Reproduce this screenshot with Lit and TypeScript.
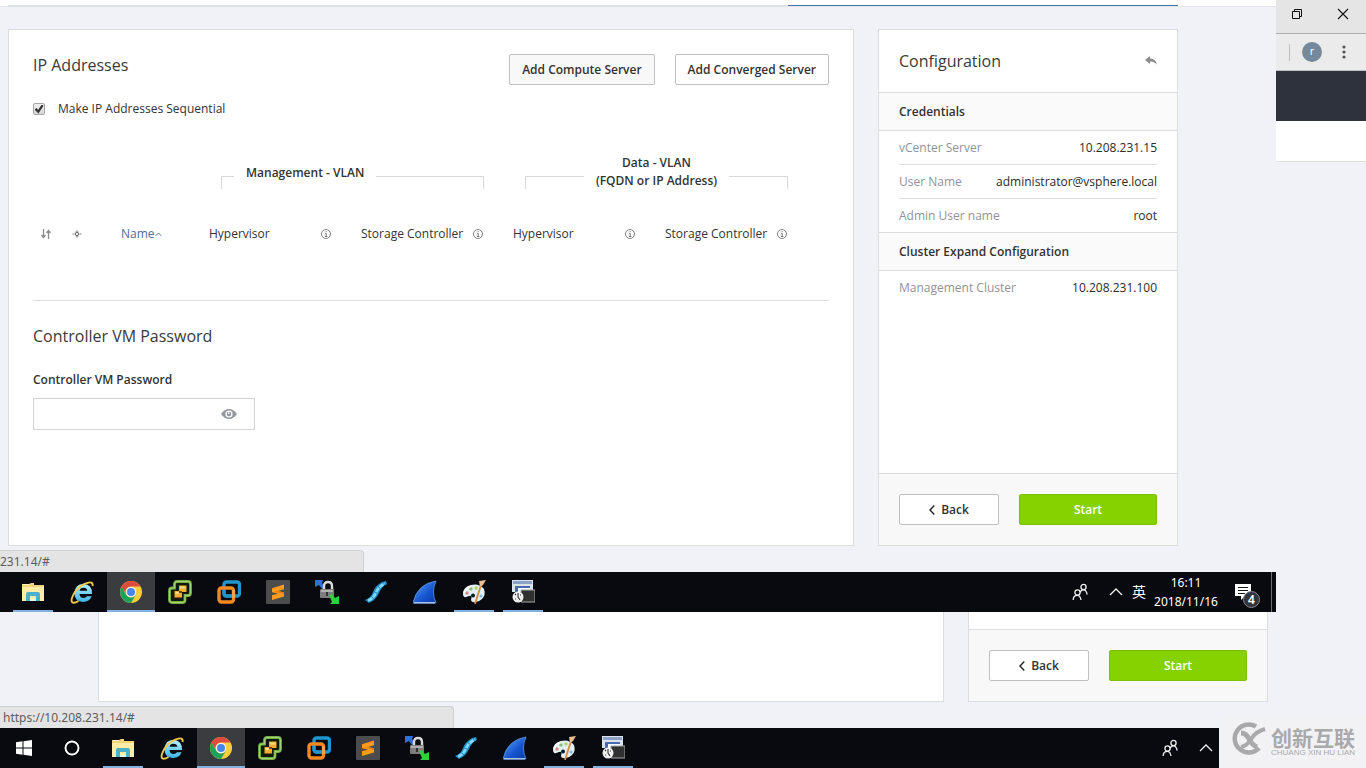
import { LitElement, html, css, svg, nothing } from "lit";
import { customElement, property } from "lit/decorators.js";
import { classMap } from "lit/directives/class-map.js";

const folder = svg`
  <path d="M1 4h7l2-1h3v2h10v16H1z" fill="#f2d675"/>
  <path d="M1 7h22v14H1z" fill="#ffeca8"/>
  <path d="M2 4h6v1H2z" fill="#fff6d0"/>
  <path d="M5 14q0-2 2-2h10q2 0 2 2v7h-4v-5H9v5H5z" fill="#4bb1c6"/>
  <path d="M9 19h6v2H9z" fill="#e8f6f7"/>`;

const explorer = svg`
  <defs><linearGradient id="ie" x1="0" y1="0" x2="0" y2="1">
    <stop offset="0" stop-color="#b5efff"/><stop offset="1" stop-color="#3cb4e8"/>
  </linearGradient></defs>
  <path d="M22 14H9.500q.4 4 4 4 2.400 0 3.500-1.700h4.600Q19.500 22 13 22 4.500 21.500 4.500 13 5 4 13.500 4 22.500 4.500 22 14zM17.300 10.700Q17 7.800 13.500 7.800T9.600 10.700z" fill="url(#ie)"/>
  <path d="M22.500 6Q23.500 1.600 18.500 2.600 10.500 4.500 5.200 11.500-.3 20.500 2.500 22.500q2 1 6-1.500" fill="none" stroke="#f2c84b" stroke-width="1.900"/>`;

const chrome = svg`
  <circle cx="12" cy="12" r="11" fill="#f7cf3b"/>
  <path d="M2.500 6.500A11 11 0 0 1 21.500 6.500H12A5.500 5.500 0 0 0 7.200 14.800z" fill="#dd4b3e"/>
  <path d="M2.500 6.500A11 11 0 0 0 12 23L16.800 14.800A5.500 5.500 0 0 1 7.200 14.800z" fill="#1fa05c"/>
  <circle cx="12" cy="12" r="5.200" fill="#f5f5f5"/>
  <circle cx="12" cy="12" r="4" fill="#4a84ee"/>`;

const vsphere = svg`
  <path d="M9 1.500h11q2.500 0 2.500 2.500v9q0 2.500-2.500 2.500h-3V20q0 2.500-2.500 2.500H4q-2.500 0-2.500-2.500v-9.500Q1.500 8 4 8h2.500V4Q6.500 1.500 9 1.500z" fill="#11190a" stroke="#74b042" stroke-width="2.800"/>
  <path d="M9 1.500h11q2.500 0 2.500 2.500v9q0 2.500-2.500 2.500h-3V20q0 2.500-2.500 2.500H4q-2.500 0-2.500-2.500v-9.500Q1.500 8 4 8h2.500V4Q6.500 1.500 9 1.500z" fill="none" stroke="#b9de8c" stroke-width=".7"/>
  <path d="M11 5.500h7.500V12H14v5.500H6.500V11H11z" fill="#f3ad33"/>
  <path d="M12 6.500h5.500v2H12zM7.500 12H11v2H7.500z" fill="#ffdb80"/>
  <path d="M11 11h3v2h-3z" fill="#6a4510"/>`;

const workstation = svg`
  <rect x="7" y="2" width="15.500" height="14" rx="2.500" fill="none" stroke="#2196cc" stroke-width="3.400"/>
  <rect x="2" y="8" width="14.500" height="14" rx="2.500" fill="none" stroke="#f28a24" stroke-width="3.400"/>
  <path d="M7 9.800V13.500q0 2.500 2.500 2.500H14" fill="none" stroke="#2196cc" stroke-width="3"/>
  <path d="M16.500 10v8" stroke="#f7a04b" stroke-width="3"/>`;

const sublime = svg`
  <rect width="24" height="24" rx="1" fill="#4c4c4c"/>
  <path d="M6 8.200L18 4.500V9.300L12 11 18 12.400V16.500L6 20V15.300L12 13.600 6 12.200z" fill="#ff9a1d"/>
  <path d="M12 11L18 12.400V14L8 11.800z" fill="#ea830f"/>`;

const transfer = svg`
  <path d="M0 0h8l-1 3 3 4-3 2-3-4-4 2z" fill="#2f6fe4"/>
  <path d="M9 9V6q0-4 4-4t4 4v4" fill="none" stroke="#dadada" stroke-width="2.400"/>
  <rect x="5" y="9" width="14" height="9" rx="1" fill="#7d7d7d"/>
  <path d="M6 10h12v2H6z" fill="#b0b0b0"/><path d="M11 12h2v4h-2z" fill="#333"/>
  <path d="M14 15l3-1 3 4 4-2v8h-9l2-2z" fill="#2fd13b"/>`;

const ribbon = svg`
  <path d="M1 20Q7 18 9 12T18 2l4-1 1 3q-5 2-8 9T5 23z" fill="#1f8fc6"/>
  <path d="M4 20.500Q9 19 12 12.500T21 3.500" fill="none" stroke="#7fd8f7" stroke-width="2.800" stroke-dasharray="5 1"/>`;

const fin = svg`
  <defs><linearGradient id="fin" x1="0" y1="0" x2="1" y2="1">
    <stop offset="0" stop-color="#5ea4f8"/><stop offset=".6" stop-color="#1554cf"/><stop offset="1" stop-color="#0a3ba4"/>
  </linearGradient></defs>
  <path d="M0 23Q4 4 23 1 18 12 23 23z" fill="url(#fin)" stroke="#5d94df" stroke-width=".8"/>
  <path d="M1 22h21v1.500H1z" fill="#a9c5ee"/>`;

const palette = svg`
  <path d="M1 14Q1 7 9 5t13 4q2 6-2 10t-9 3q-3-1-1.500-4 .5-3-2.500-2Q1 19 1 14z" fill="#e3f0f6"/>
  <path d="M2 13Q4 8 9 6.500" fill="none" stroke="#fff" stroke-width="2"/>
  <circle cx="5" cy="13" r="1.700" fill="#d98a84"/><circle cx="9" cy="9" r="1.700" fill="#8bbd78"/>
  <circle cx="14" cy="8" r="1.700" fill="#b4cf68"/><circle cx="11" cy="15.500" r="2" fill="#0a1a26"/>
  <circle cx="19" cy="16" r="1.600" fill="#7dbbe0"/>
  <path d="M19 5L13 24" stroke="#d48a3e" stroke-width="1.800"/><path d="M17 1l7-1-3 5-3 2z" fill="#e9bd8c"/>`;

const scheduler = svg`
  <path d="M1 0h21v12H1z" fill="#dbe2ea"/><path d="M2 1h19v3H2z" fill="#8ba2c6"/>
  <path d="M4 6h15v3H8v6H4z" fill="#4b69ae"/><path d="M7 8h12v4H7z" fill="#f7fafc"/>
  <path d="M10 10h14v12H10z" fill="#303030" stroke="#a8a8a8"/>
  <circle cx="7" cy="17" r="5.500" fill="#f0f0f0"/>
  <path d="M7 13v4l2 3M4 14l1 1M4 19h1M9 15h1" stroke="#333" stroke-width="1.100" fill="none"/>`;

const winLogo = svg`
  <path d="M4 6.300L10.500 5.300V11.500H4zM11.500 5.200L20 4V11.500H11.500zM4 12.500H10.500V18.700L4 17.700zM11.500 12.500H20V20L11.500 18.800z" fill="#fff"/>`;
const cortana = svg`<circle cx="12" cy="12" r="6.500" fill="none" stroke="#fff" stroke-width="1.900"/>`;

const people = svg`
  <g fill="none" stroke="#eee" stroke-width="1.300">
    <circle cx="5.500" cy="9.500" r="2.600"/><circle cx="11.500" cy="4" r="2.600"/>
    <path d="M1.200 17q0-4.600 4.300-4.600 2.600 0 3.500 4.600M8.300 9.500q.5-2.700 3.200-2.700t3.700 4.700"/>
  </g>`;

interface App { name: string; icon: unknown; state?: "open" | "active"; }

const apps: App[] = [
  { name: "File Explorer", icon: folder, state: "open" },
  { name: "Internet Explorer", icon: explorer },
  { name: "Chrome", icon: chrome, state: "active" },
  { name: "vSphere Client", icon: vsphere },
  { name: "Workstation", icon: workstation },
  { name: "Sublime Text", icon: sublime },
  { name: "WinSCP", icon: transfer },
  { name: "Terminal", icon: ribbon },
  { name: "Wireshark", icon: fin },
  { name: "Paint", icon: palette, state: "open" },
  { name: "Scheduler", icon: scheduler, state: "open" },
];

@customElement("task-bar")
export class TaskBar extends LitElement {
  @property({ type: Boolean }) start = false;
  @property({ type: Boolean }) clock = false;

  static styles = css`
    :host { display: block; background: #080a10; color: #fff; font-family: "Noto Sans", "Noto Sans CJK SC", sans-serif; }
    .bar { display: flex; height: 40px; }
    button { border: 0; padding: 0; margin: 0; background: none; color: inherit; font: inherit; display: flex; align-items: center; justify-content: center; }
    .system { display: flex; flex: none; width: 90px; }
    .system button { flex: none; width: 48px; }
    .apps { display: flex; gap: 1px; padding-left: 9px; flex: 1; }
    .app { width: 48px; }
    .app.open { background: linear-gradient(#83b2e0, #83b2e0) center bottom / 40px 2px no-repeat; }
    .app.active { background: linear-gradient(#83b2e0, #83b2e0) center bottom / 100% 2px no-repeat, #3b3c40; }
    .tray { display: flex; align-items: center; padding-right: 4px; }
    .tray.bare { padding-right: 152px; }
    .people { width: 30px; margin-right: 13px; }
    .chevron { width: 16px; }
    .lang { width: 16px; margin: 0 5px 0 7px; font-size: 14px; }
    .time { font-size: 12px; line-height: 19px; text-align: center; width: 68px; }
    .notes { position: relative; width: 36px; height: 40px; margin: 0 15px 0 0; padding-left: 9px; }
    .edge { width: 1px; height: 40px; background: #6b6d72; }
    .tray .notes { margin-right: 15px; }
    .count { position: absolute; right: -4px; bottom: 4px; width: 15px; height: 15px; border: 1px solid #85878c; border-radius: 50%; background: #33353a; font-size: 12px; line-height: 15px; font-weight: 600; }
  `;

  render() {
    return html`<div class="bar">
      ${this.start ? html`<div class="system">
        <button aria-label="Start menu"><svg width="24" height="24" viewBox="0 0 24 24">${winLogo}</svg></button>
        <button aria-label="Cortana"><svg width="24" height="24" viewBox="0 0 24 24">${cortana}</svg></button>
      </div>` : nothing}
      <div class="apps">
        ${apps.map((a) => html`<button aria-label=${a.name}
          class=${classMap({ app: true, open: a.state === "open", active: a.state === "active" })}>
          <svg width="24" height="24" viewBox="0 0 24 24">${a.icon}</svg></button>`)}
      </div>
      <div class=${classMap({ tray: true, bare: !this.clock })}>
        <button class="people" aria-label="People"><svg width="17" height="19" viewBox="0 0 17 19">${people}</svg></button>
        <button class="chevron" aria-label="Hidden icons"><svg width="14" height="8" viewBox="0 0 14 8"><path d="M1 7l6-6 6 6" fill="none" stroke="#eee" stroke-width="1.300"/></svg></button>
        ${this.clock ? html`
          <button class="lang">英</button>
          <div class="time">16:11<br />2018/11/16</div>
          <button class="notes" aria-label="Notifications">
            <svg width="18" height="18" viewBox="0 0 18 18"><path d="M1 1h16v12h-6l-4 4v-4H1z" fill="#fff"/><path d="M4 4.500h10M4 7.500h10M4 10.500h7" stroke="#15171c"/></svg>
            <span class="count">4</span>
          </button>
          <span class="edge"></span>` : nothing}
      </div>
    </div>`;
  }
}

@customElement("wizard-actions")
export class WizardActions extends LitElement {
  static styles = css`
    :host { display: block; border-top: 1px solid #dcdde1; background: #f8f8f8; padding: 20px; font: 12px/18px "Open Sans", sans-serif; }
    .row { display: flex; gap: 20px; }
    button { height: 31px; border-radius: 2px; font: inherit; font-weight: 600; padding: 0; display: flex; align-items: center; justify-content: center; gap: 6px; }
    .back { width: 100px; border: 1px solid #bfc0c4; background: #fff; color: #333; }
    .start { flex: 1; border: 1px solid #7cc004; background: #85d200; color: #fff; }
  `;
  render() {
    return html`<div class="row">
      <button class="back"><svg width="6" height="10" viewBox="0 0 6 10"><path d="M5.300 .6L1 5l4.300 4.400" fill="none" stroke="#222" stroke-width="1.400"/></svg>Back</button>
      <button class="start">Start</button>
    </div>`;
  }
}

const info = html`<svg class="info" width="10" height="10" viewBox="0 0 10 10"><circle cx="5" cy="5" r="4.500" fill="none" stroke="#777" stroke-width=".9"/><path d="M4 4.300h1.200v3.200M4 7.500h2.300M4.600 2.500h1" fill="none" stroke="#666" stroke-width=".9"/></svg>`;

const credentials = [
  ["vCenter Server", "10.208.231.15"],
  ["User Name", "administrator@vsphere.local"],
  ["Admin User name", "root"],
];
const cluster = [["Management Cluster", "10.208.231.100"]];

@customElement("app-root")
export class AppRoot extends LitElement {
  static styles = css`
    :host { display: block; font: 12px/18px "Open Sans", "Noto Sans CJK SC", sans-serif; color: #333; }
    * { box-sizing: border-box; }
    .screen { position: relative; display: grid; grid-template-columns: minmax(0, 1fr) 90px; grid-template-rows: 1fr auto auto; min-height: 100vh; background: #f1f2f7; }
    .front { display: flex; flex-direction: column; }
    .steps { display: flex; height: 7px; padding: 0 98px 0 8px; background: #fff; box-shadow: inset 0 -1px #e4e5e9; }
    .step { flex: 1; border-bottom: 2px solid #dfe0e3; }
    .step.current { margin-bottom: 1px; border-bottom: 1px solid #4a75a8; }
    .page { position: relative; flex: 1; display: flex; gap: 24px; padding: 22px 98px 26px 8px; }
    .card { background: #fff; border: 1px solid #dcdde1; }
    .main { flex: 1; min-width: 0; padding: 24px; }
    .side { width: 300px; display: flex; flex-direction: column; }
    .head { display: flex; justify-content: space-between; align-items: flex-start; }
    h1, h2, h3 { margin: 0; font-weight: 400; }
    h1, h2 { font-size: 16px; line-height: 22px; color: #3a3a3a; }
    .buttons { display: flex; gap: 20px; }
    .add { height: 31px; padding: 0 12px; border: 1px solid #bfc0c4; border-radius: 2px; background: #fff; color: #333; font: inherit; font-weight: 600; }
    .add.hover { background: #f8f8f8; }
    .check { display: flex; align-items: center; gap: 13px; margin-top: 15px; }
    .check input { appearance: none; margin: 0; width: 12px; height: 12px; border: 1px solid #a5a5a5; border-radius: 2px; background: linear-gradient(#f0f0f0, #d8d8d8); display: grid; place-items: center; }
    .check input:checked::before { content: ""; width: 9px; height: 9px; background: #333; clip-path: polygon(0 55%, 22% 38%, 40% 60%, 80% 0, 100% 14%, 44% 100%); }
    table { width: 100%; margin-top: 36px; border-collapse: collapse; table-layout: fixed; border-bottom: 1px solid #dcdde1; }
    th { padding: 0; font-weight: 400; text-align: left; vertical-align: bottom; }
    .c-sort { width: 31px; } .c-state { width: 45px; } .c-name { width: 88px; } .c-end { width: 24px; }
    .group { display: flex; align-items: flex-end; margin: 0 17px 0 24px; font-weight: 600; text-align: center; }
    .group i { flex: 1; height: 13px; margin-bottom: 1px; border-top: 1px solid #d6d7db; }
    .group i:first-child { border-left: 1px solid #d6d7db; }
    .group i:last-child { border-right: 1px solid #d6d7db; }
    .group .short { flex: 0 0 13px; }
    .group span { padding: 0 12px; }
    .group .raised { padding-bottom: 8px; }
    .labels th { padding: 35px 0 57px 12px; vertical-align: middle; }
    .labels th.tight { padding-left: 8px; }
    .labels svg { display: block; }
    .label { display: flex; align-items: center; justify-content: space-between; padding-right: 18px; }
    .sorted { display: flex; align-items: center; color: #4a6ea5; text-decoration: none; }
    .section { margin-top: 24px; }
    .field-label { display: block; margin: 24px 0 9px; font-weight: 600; }
    .field { display: flex; align-items: center; width: 222px; height: 32px; border: 1px solid #d3d4d8; }
    .field input { flex: 1; min-width: 0; height: 30px; border: 0; outline: 0; padding: 0 10px; background: none; font: inherit; }
    .icon-button { display: flex; padding: 0; border: 0; background: none; }
    .field .icon-button { margin-right: 17px; }
    .title { display: flex; align-items: center; justify-content: space-between; height: 62px; padding: 0 20px; }
    h3 { padding: 10px 20px 9px; border: solid #dcdde1; border-width: 1px 0; background: #fafafa; font-size: 12px; font-weight: 600; height: 39px; }
    dl { margin: 0 20px; flex: none; }
    dl div { display: flex; justify-content: space-between; height: 34px; padding-top: 8px; border-bottom: 1px solid #dcdde1; }
    dl div:last-child { border-bottom: 0; height: 33px; }
    dl:last-of-type { flex: 1 0 auto; }
    dt { color: #8f9399; }
    dd { margin: 0; color: #2b2b2b; }
    .bubble { position: absolute; left: 0; bottom: 0; height: 22px; border: 1px solid #cfd0d2; border-width: 1px 1px 0 0; border-radius: 0 4px 0 0; background: #e4e4e5; color: #5c5c5c; font: 12px/21px "Noto Sans", sans-serif; white-space: nowrap; }
    .bubble.cut { width: 364px; }
    .bubble.full { width: 454px; padding-left: 3px; }
    .browser { display: flex; flex-direction: column; }
    .controls { display: flex; justify-content: space-between; align-items: center; height: 34px; padding: 0 17px 5px 15px; background: #e5e5e5; border-bottom: 1px solid #b0b0b0; }
    .tools { display: flex; align-items: center; height: 37px; padding: 0 20px 0 13px; background: #ebebeb; border-bottom: 1px solid #c4c4c6; }
    .divider { width: 1px; height: 17px; background: #bfbfbf; }
    .avatar { width: 20px; height: 20px; margin: 0 auto 0 12px; border-radius: 50%; background: #74899b; color: #fff; font-size: 11px; line-height: 18px; text-align: center; }
    .navbar { height: 50px; background: #2e323d; }
    .subnav { height: 41px; background: #fff; border-bottom: 1px solid #dfe0e4; }
    .behind { position: relative; grid-column: 1 / -1; display: flex; gap: 24px; padding: 0 98px 26px; }
    .behind .card { border-top: 0; }
    .behind .side { padding-top: 17px; }
    .dock { grid-column: 1 / -1; }
    .mark { position: absolute; right: 0; bottom: 0; display: flex; align-items: flex-start; gap: 4px; width: 147px; height: 50px; padding: 4px 8px 0 12px; background: #f2f2f4; color: #a9a9ab; }
    .brand { display: flex; flex-direction: column; padding-top: 3px; font: 700 21px/24px "Noto Sans CJK SC", sans-serif; white-space: nowrap; }
    .brand small { font: 8px/8px "Liberation Sans", sans-serif; }
  `;

  private rows(items: string[][]) {
    return html`<dl>${items.map(([k, v]) => html`<div><dt>${k}</dt><dd>${v}</dd></div>`)}</dl>`;
  }

  render() {
    return html`<div class="screen">
      <div class="front">
        <div class="steps"><span class="step"></span><span class="step"></span><span class="step current"></span></div>
        <div class="page">
          <main class="card main">
            <div class="head">
              <h1>IP Addresses</h1>
              <div class="buttons">
                <button class="add hover">Add Compute Server</button>
                <button class="add">Add Converged Server</button>
              </div>
            </div>
            <label class="check"><input type="checkbox" checked />Make IP Addresses Sequential</label>
            <table>
              <colgroup><col class="c-sort" /><col class="c-state" /><col class="c-name" /><col /><col /><col /><col /><col class="c-end" /></colgroup>
              <thead>
                <tr>
                  <th colspan="3"></th>
                  <th colspan="2"><div class="group"><i class="short"></i><span class="raised">Management - VLAN</span><i></i></div></th>
                  <th colspan="2"><div class="group"><i></i><span>Data - VLAN<br />(FQDN or IP Address)</span><i></i></div></th>
                  <th></th>
                </tr>
                <tr class="labels">
                  <th class="tight"><svg width="10" height="10" viewBox="0 0 10 10"><path d="M2.500 0v8M.5 6l2 2.500 2-2.500M7.500 10V2M5.500 4l2-2.500 2 2.500" fill="none" stroke="#8a8a8a" stroke-width="1.300"/></svg></th>
                  <th class="tight"><svg width="10" height="10" viewBox="0 0 10 10"><circle cx="5" cy="5" r="1.600" fill="none" stroke="#666"/><path d="M.5 5h2M7.500 5h2M3.500 3L5 1.700l1.500 1.300M3.500 7L5 8.300l1.500-1.300" fill="none" stroke="#777" stroke-width=".9"/></svg></th>
                  <th><a class="sorted" href="#">Name<svg width="7" height="5" viewBox="0 0 7 5"><path d="M.5 4l3-3 3 3" fill="none" stroke="#4a6ea5" stroke-width=".9"/></svg></a></th>
                  <th><div class="label">Hypervisor${info}</div></th>
                  <th><div class="label">Storage Controller${info}</div></th>
                  <th><div class="label">Hypervisor${info}</div></th>
                  <th><div class="label">Storage Controller${info}</div></th>
                  <th></th>
                </tr>
              </thead>
            </table>
            <h2 class="section">Controller VM Password</h2>
            <label class="field-label" for="password">Controller VM Password</label>
            <div class="field">
              <input id="password" type="password" />
              <button class="icon-button" aria-label="Show password"><svg width="16" height="10" viewBox="0 0 16 10"><path d="M0 5Q3.500 0 8 0t8 5q-3.500 5-8 5T0 5z" fill="#92969f"/><circle cx="8" cy="5" r="3.600" fill="#fff"/><circle cx="8" cy="5" r="2.300" fill="#92969f"/><path d="M7 3.500h1.500v1.500H7z" fill="#fff"/></svg></button>
            </div>
          </main>
          <aside class="card side">
            <div class="title"><h2>Configuration</h2>
              <button class="icon-button" aria-label="Undo"><svg width="12" height="10" viewBox="0 0 12 10"><path d="M0 4L5 0v2.500q6 0 7 6.500-2-3.500-7-3.500V8z" fill="#8b8b8b"/></svg></button></div>
            <h3>Credentials</h3>
            ${this.rows(credentials)}
            <h3>Cluster Expand Configuration</h3>
            ${this.rows(cluster)}
            <wizard-actions></wizard-actions>
          </aside>
          <div class="bubble cut">231.14/#</div>
        </div>
        <task-bar clock></task-bar>
      </div>
      <div class="browser">
        <div class="controls">
          <button class="icon-button" aria-label="Restore"><svg width="12" height="12" viewBox="0 0 12 12"><path d="M1.500 3.500h7v7h-7zM3.500 3.500v-2h7v7h-2" fill="none" stroke="#111"/></svg></button>
          <button class="icon-button" aria-label="Close"><svg width="12" height="12" viewBox="0 0 12 12"><path d="M1 1l10 10M11 1L1 11" stroke="#111" stroke-width="1.100"/></svg></button>
        </div>
        <div class="tools"><span class="divider"></span><span class="avatar">r</span>
          <button class="icon-button" aria-label="Menu"><svg width="4" height="14" viewBox="0 0 4 14"><g fill="#555"><circle cx="2" cy="2" r="1.600"/><circle cx="2" cy="7" r="1.600"/><circle cx="2" cy="12" r="1.600"/></g></svg></button></div>
        <div class="navbar"></div>
        <div class="subnav"></div>
      </div>
      <div class="behind">
        <div class="card main"></div>
        <div class="card side"><wizard-actions></wizard-actions></div>
        <div class="bubble full">https://10.208.231.14/#</div>
      </div>
      <task-bar class="dock" start></task-bar>
      <div class="mark">
        <svg width="36" height="34" viewBox="0 0 36 34"><g fill="none" stroke="#a9a9ab"><path d="M25 4.500A14 14 0 1 0 28 26" stroke-width="4.500"/><path d="M10 11q5 0 8 6t8 8" stroke-width="5"/><path d="M10 25q6-1 10-8T34 7" stroke-width="4"/></g></svg>
        <div class="brand"><span>创新互联</span><small>CHUANG XIN HU LIAN</small></div>
      </div>
    </div>`;
  }
}
